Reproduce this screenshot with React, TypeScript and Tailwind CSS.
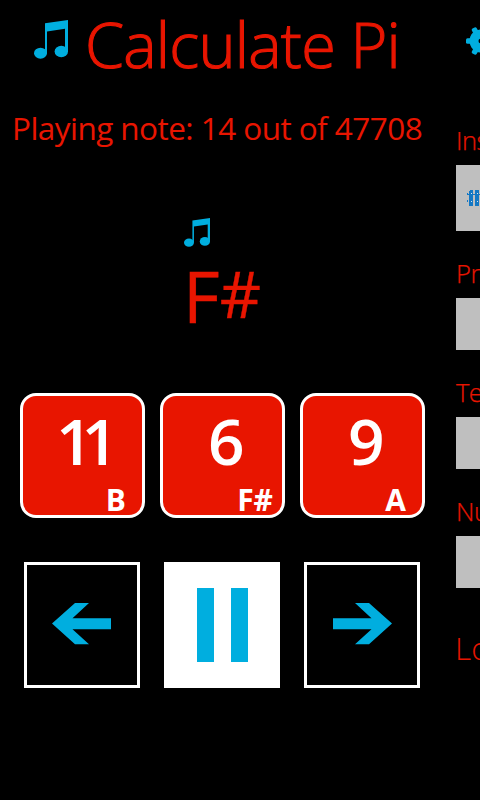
import React from "react";

const FONT = "font-['Open_Sans','Noto_Sans',sans-serif]";

function Note({ className }: { className: string }) {
  return (
    <svg viewBox="0 0 34 39" preserveAspectRatio="none" className={className} fill="#00aedf">
      <path d="M11 3.300 34 0V32H31V8.700L13 11.500V33H11Z" />
      <ellipse cx="6.500" cy="33.200" rx="6.500" ry="5.500" />
      <ellipse cx="27.300" cy="31.500" rx="6.700" ry="5.800" />
    </svg>
  );
}

function Gear() {
  const teeth = [0, 60, 120, 180, 240, 300];
  return (
    <svg viewBox="-15 -15 30 30" className="h-[30px] w-[30px] shrink-0" fill="#00aedf">
      <circle r="11.500" />
      {teeth.map((a) => (
        <rect key={a} transform={`rotate(${a - 30})`} x="-2.700" y="-15" width="5.400" height="6" rx="1.500" />
      ))}
      <circle r="2.500" fill="#000" />
    </svg>
  );
}

function Instrument() {
  return (
    <svg viewBox="0 0 30 18" className="h-[18px] w-[30px] shrink-0" fill="#1478c4" shapeRendering="crispEdges">
      <path d="M0 5H30V6H0ZM0 4H1V6H0ZM0 11H1V13H0ZM3 1H6V17H2V2H3ZM9 1H12V17H8V1ZM14 1H18V17H14Z" />
      <path d="M4 12h1v1H4ZM4 4h1v1H4ZM10 12h1v1H10ZM10 4h1v1H10Z" fill="#d8e4ee" />
    </svg>
  );
}

function Arrow({ className = "" }: { className?: string }) {
  return (
    <svg viewBox="0 0 59 42" className={`mb-[3px] h-[42px] w-[59px] ${className}`} fill="#00aedf">
      <path d="M0 20.500 23 0H37L20.500 15.300H59V26.300H20.500L37 41.300H23Z" />
    </svg>
  );
}

function Tile({ num, note, numClass, noteClass }: { num: string; note: string; numClass: string; noteClass: string }) {
  return (
    <div className="flex h-[125px] w-[125px] flex-col rounded-[16px] border-[3px] border-white bg-[#e81500] text-white">
      <div className={`mt-[13px] h-[64px] text-[64px] leading-[64px] font-semibold ${numClass}`}>{num}</div>
      <div className={`mt-[12px] h-[30px] text-right text-[30px] leading-[30px] font-bold ${noteClass}`}>{note}</div>
    </div>
  );
}

function Field({ label, className, children }: { label: string; className: string; children?: React.ReactNode }) {
  return (
    <div className="w-[240px]">
      <div className="mb-[8px] h-[32px] text-[25.500px] leading-[31px] font-light tracking-[-0.5px] [-webkit-text-stroke:0.25px_#e81500]">{label}</div>
      <div className={`bg-[#bfbfbf] ${className}`}>{children}</div>
    </div>
  );
}

export default function App() {
  return (
    <div className={`flex h-[800px] w-[480px] overflow-hidden bg-black text-[#e81500] ${FONT}`}>
      <main className="w-[456px] shrink-0">
        <header className="flex h-[90px] pt-[20px] pl-[34px]">
          <Note className="h-[39px] w-[34px] shrink-0" />
          <h1 className="ml-[17px] h-[50px] text-[63px] leading-[48px] font-light tracking-[-0.8px] whitespace-nowrap [-webkit-text-stroke:1.1px_#e81500]">Calculate Pi</h1>
        </header>
        <p className="mt-[22px] ml-[12px] h-[32px] text-[31.500px] leading-[32px] tracking-[-0.55px] whitespace-nowrap">Playing note: 14 out of 47708</p>
        <div className="mt-[74px] ml-[184px] h-[30px]">
          <Note className="h-[29px] w-[26px]" />
        </div>
        <div className="mt-[12px] mb-[2px] ml-[183px] flex h-[71px] text-[71px] leading-[71px] [-webkit-text-stroke:0.4px_#e81500]">
          <span>F</span>
          <span className="mt-[-2px] text-[64px]">#</span>
        </div>
        <div className="mt-[62px] ml-[20px] flex gap-[15px]">
          <Tile num="11" note="B" numClass="pl-[33px] tracking-[-11px]" noteClass="pr-[16px]" />
          <Tile num="6" note="F#" numClass="pl-[45px]" noteClass="pr-[9px]" />
          <Tile num="9" note="A" numClass="pl-[45px]" noteClass="pr-[16px]" />
        </div>
        <div className="mt-[44px] ml-[24px] flex gap-[24px]">
          <button className="flex h-[126px] w-[116px] items-center justify-center border-[3px] border-white pr-px">
            <Arrow />
          </button>
          <button className="flex h-[126px] w-[116px] items-center justify-center gap-[17px] bg-white">
            <span className="h-[74px] w-[17px] bg-[#00aedf]" />
            <span className="h-[74px] w-[17px] bg-[#00aedf]" />
          </button>
          <button className="flex h-[126px] w-[116px] items-center justify-center border-[3px] border-white">
            <Arrow className="-scale-x-100" />
          </button>
        </div>
      </main>
      <aside className="w-[240px] shrink-0">
        <div className="h-[125px] pt-[26px] pl-[10px]">
          <Gear />
        </div>
        <div className="flex flex-col gap-[27px]">
          <Field label="Instrument" className="flex h-[66px] items-center pl-[11px]">
            <Instrument />
          </Field>
          <Field label="Precision" className="h-[52px]" />
          <Field label="Tempo" className="h-[52px]" />
          <Field label="Number" className="h-[52px]" />
        </div>
        <div className="mt-[42px] -ml-px text-[31.500px] leading-[36px] font-light">Loop</div>
      </aside>
    </div>
  );
}
